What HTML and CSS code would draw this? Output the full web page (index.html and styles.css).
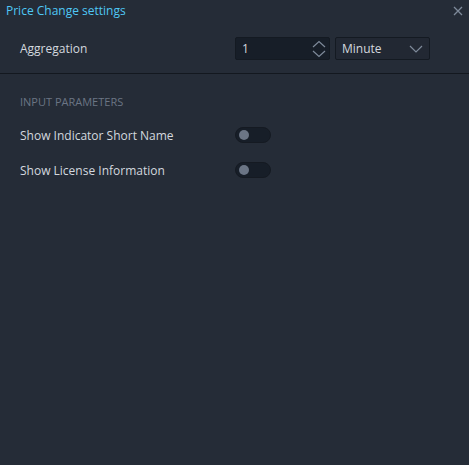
FILE: index.html
```html
<!DOCTYPE html>
<html>
<head>
<meta charset="utf-8">
<link rel="stylesheet" href="styles.css">
</head>
<body>
<div class="dialog">
  <div class="header">
    <span class="title">Price Change settings</span>
    <svg class="close" width="10" height="10" viewBox="0 0 10 10"><path d="M1 1L9 9M9 1L1 9" stroke="#7e8a9a" stroke-width="1.3"/></svg>
  </div>
  <div class="agg-row">
    <span class="label">Aggregation</span>
    <div class="controls">
      <div class="num">
        <span>1</span>
        <svg class="spin" width="14" height="18" viewBox="0 0 14 18"><path d="M1 7L7 1.5L13 7" fill="none" stroke="#7e8a9a" stroke-width="1.2"/><path d="M1 11L7 16.5L13 11" fill="none" stroke="#7e8a9a" stroke-width="1.2"/></svg>
      </div>
      <div class="select">
        <span>Minute</span>
        <svg width="14" height="8" viewBox="0 0 14 8"><path d="M1 1L7 7L13 1" fill="none" stroke="#7e8a9a" stroke-width="1.2"/></svg>
      </div>
    </div>
  </div>
  <div class="params">
    <div class="section">INPUT PARAMETERS</div>
    <div class="row">
      <span class="label">Show Indicator Short Name</span>
      <span class="toggle"><span class="knob"></span></span>
    </div>
    <div class="row">
      <span class="label">Show License Information</span>
      <span class="toggle"><span class="knob"></span></span>
    </div>
  </div>
</div>
</body>
</html>
```
FILE: styles.css
```css
html, body {
  margin: 0;
  padding: 0;
  background: #252c37;
}
.dialog {
  width: 469px;
  height: 465px;
  background: #252c37;
  font-family: "Open Sans", "Noto Sans", sans-serif;
  font-size: 12px;
  font-weight: 500;
  color: #d3d8df;
}
.header {
  display: flex;
  justify-content: space-between;
  align-items: center;
  height: 22px;
  padding: 0 6px;
}
.title {
  color: #4fc8f5;
  font-size: 12px;
  margin-top: -2px;
}
.agg-row {
  display: flex;
  align-items: center;
  justify-content: space-between;
  padding: 15px 39px 13px 20px;
  border-bottom: 1px solid #13181f;
}
.controls {
  display: flex;
  gap: 5px;
}
.num, .select {
  box-sizing: border-box;
  height: 23px;
  width: 95px;
  border: 1px solid #141a22;
  border-radius: 2px;
  display: flex;
  align-items: center;
  justify-content: space-between;
  padding: 0 3px 0 6px;
  color: #d3d8df;
}
.num {
  background: #171e28;
}
.select {
  background: #222833;
  padding-right: 6px;
}
.params {
  padding: 20px 20px 0 20px;
}
.section {
  color: #6b7584;
  font-size: 11px;
  margin-bottom: 17px;
}
.row {
  display: flex;
  align-items: center;
  height: 18px;
  margin-bottom: 17px;
}
.row .label {
  width: 215px;
}
.toggle {
  width: 36px;
  height: 16px;
  border-radius: 8px;
  background: #171e28;
  border: 1px solid #151a22;
  box-sizing: border-box;
  display: flex;
  align-items: center;
  padding-left: 3px;
}
.knob {
  width: 10px;
  height: 10px;
  border-radius: 50%;
  background: #6b7585;
}
```
